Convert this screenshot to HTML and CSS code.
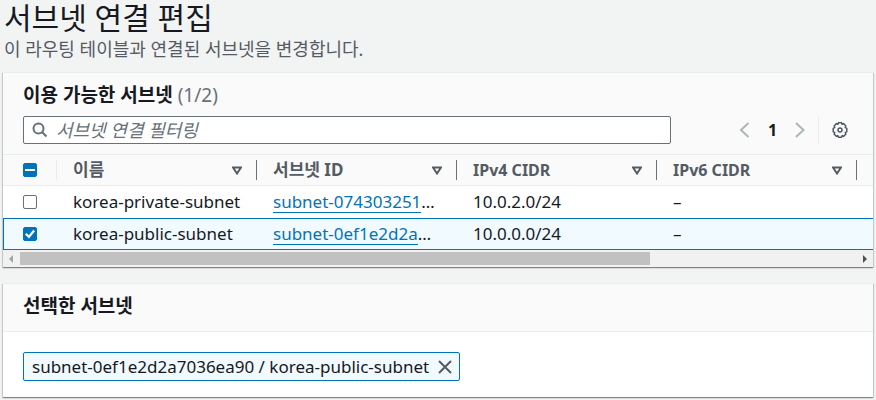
FILE: index.html
```html
<!DOCTYPE html>
<html lang="ko">
<head>
<meta charset="utf-8">
<meta name="viewport" content="width=device-width, initial-scale=1">
<title>서브넷 연결 편집</title>
<link rel="stylesheet" href="styles.css">
</head>
<body>
<main class="page">
  <header class="page-header">
    <h1>서브넷 연결 편집</h1>
    <p>이 라우팅 테이블과 연결된 서브넷을 변경합니다.</p>
  </header>

  <section class="panel">
    <div class="panel-top">
      <h2>이용 가능한 서브넷 <span class="count">(1/2)</span></h2>
      <div class="tools">
        <label class="search">
          <svg class="search-icon" viewBox="0 0 16 16" width="16" height="16" aria-hidden="true"><circle cx="6.5" cy="6.5" r="5"/><path d="M10.2 10.2 14.500 14.500"/></svg>
          <input type="text" placeholder="서브넷 연결 필터링" aria-label="서브넷 연결 필터링">
        </label>
        <nav class="pager">
          <button type="button" class="icon-button arrow" aria-label="이전"><svg viewBox="0 0 16 16" width="16" height="16"><path d="M11.500 1 4 8l7.500 7"/></svg></button>
          <button type="button" class="page-number">1</button>
          <button type="button" class="icon-button arrow" aria-label="다음"><svg viewBox="0 0 16 16" width="16" height="16"><path d="M4 1 11.500 8 4 15"/></svg></button>
        </nav>
        <div class="settings">
          <button type="button" class="icon-button gear" aria-label="설정"><svg viewBox="0 0 16 16" width="16" height="16"><path d="M6.500.8h3l.6 1.400 1.500-.5 2.200 2.200-.5 1.500 1.500.9v3.400l-1.500.9.5 1.500-2.200 2.200-1.500-.5-.6 1.400h-3l-.6-1.400-1.500.5-2.200-2.200.5-1.500-1.500-.9V6.300l1.500-.9-.5-1.500 2.200-2.200 1.500.5z"/><circle cx="8" cy="8" r="2"/></svg></button>
        </div>
      </div>
    </div>

    <div class="table-scroll">
      <table>
        <colgroup><col class="col-check"><col class="col-data"><col class="col-data"><col class="col-data"><col class="col-data"><col class="col-data"></colgroup>
        <thead>
          <tr>
            <th><div class="head light"><input type="checkbox" class="mixed" aria-label="모두 선택"></div></th>
            <th><div class="head korean"><span>이름</span><svg viewBox="0 0 10 9" width="10" height="9"><path d="M1 1.500h8L5 7.500z"/></svg></div></th>
            <th><div class="head korean"><span>서브넷 ID</span><svg viewBox="0 0 10 9" width="10" height="9"><path d="M1 1.500h8L5 7.500z"/></svg></div></th>
            <th><div class="head"><span>IPv4 CIDR</span><svg viewBox="0 0 10 9" width="10" height="9"><path d="M1 1.500h8L5 7.500z"/></svg></div></th>
            <th><div class="head"><span>IPv6 CIDR</span><svg viewBox="0 0 10 9" width="10" height="9"><path d="M1 1.500h8L5 7.500z"/></svg></div></th>
            <th></th>
          </tr>
        </thead>
        <tbody>
          <tr>
            <td><input type="checkbox" aria-label="korea-private-subnet"></td>
            <td>korea-private-subnet</td>
            <td><a href="#">subnet-074303251</a>…</td>
            <td>10.0.2.0/24</td>
            <td>–</td>
            <td></td>
          </tr>
          <tr class="selected">
            <td><input type="checkbox" checked aria-label="korea-public-subnet"></td>
            <td>korea-public-subnet</td>
            <td><a href="#">subnet-0ef1e2d2a</a>…</td>
            <td>10.0.0.0/24</td>
            <td>–</td>
            <td></td>
          </tr>
        </tbody>
      </table>
    </div>
    <div class="scrollbar" aria-hidden="true">
      <svg class="scroll-left" viewBox="0 0 17 16" width="17" height="16"><path d="M10 4v8L6 8z"/></svg>
      <div class="track"><div class="thumb"></div></div>
      <svg class="scroll-right" viewBox="0 0 17 16" width="17" height="16"><path d="M7 4v8l4-4z"/></svg>
    </div>
  </section>

  <section class="panel">
    <div class="panel-title"><h2>선택한 서브넷</h2></div>
    <div class="panel-body">
      <span class="token">subnet-0ef1e2d2a7036ea90 / korea-public-subnet
        <button type="button" class="icon-button close" aria-label="제거"><svg viewBox="0 0 16 16" width="16" height="16"><path d="m2 2 12 12M14 2 2 14"/></svg></button>
      </span>
    </div>
  </section>
</main>
</body>
</html>
```
FILE: styles.css
```css
* { box-sizing: border-box; }

body {
  margin: 0;
  background: #f2f3f3;
  color: #16191f;
  font: 17px/22px "Noto Sans", "Noto Sans CJK KR", sans-serif;
}

h1, h2, p { margin: 0; font-weight: 400; }
button, input { font: inherit; color: inherit; }
svg { display: block; fill: none; stroke: currentColor; stroke-width: 2; }

.page { padding: 0 3px; }
.page-header { height: 72px; padding: 0 1px; }
h1 { font-size: 30px; line-height: 36px; }
.page-header p { color: #545b64; font-size: 18px; line-height: 26px; }

.panel {
  margin-bottom: 16px;
  border-top: 1px solid #eaeded;
  background: #fff;
  box-shadow: 0 1px 1px 0 rgba(0, 28, 36, 0.3), 1px 1px 1px 0 rgba(0, 28, 36, 0.15), -1px 1px 1px 0 rgba(0, 28, 36, 0.15);
}
.panel-top { padding: 8px 20px 10px; background: #fafafa; }
h2 { font-size: 19px; line-height: 28px; font-weight: 700; }
.count { color: #687078; font-weight: 400; }

.tools { display: flex; align-items: center; margin-top: 7px; }
.search {
  display: flex;
  align-items: center;
  flex: 0 1 648px;
  height: 28px;
  padding-left: 8px;
  gap: 8px;
  border: 1px solid #687078;
  border-radius: 2px;
  background: #fff;
}
.search-icon { flex: none; color: #687078; }
.search input {
  flex: 1;
  min-width: 0;
  padding: 0;
  border: 0;
  outline: 0;
  background: none;
  font-size: 18px;
}
.search input::placeholder { color: #687078; font-style: italic; opacity: 1; }

.icon-button, .page-number { padding: 0; border: 0; background: none; }
.pager { display: flex; align-items: center; margin-left: auto; }
.arrow { color: #aab7b8; }
.page-number { width: 39px; font-size: 16px; font-weight: 700; }
.settings {
  display: flex;
  align-items: center;
  height: 28px;
  margin: 0 5px 0 10px;
  padding-left: 13px;
  border-left: 1px solid #eaeded;
}
.gear { color: #545b64; }
.gear svg { overflow: visible; stroke-width: 1.5; }

.table-scroll { overflow: hidden; }
table { width: 1054px; table-layout: fixed; border-collapse: separate; border-spacing: 0; }
.col-check { width: 54px; }
.col-data { width: 200px; }
th, td { height: 32px; padding: 0 0 0 16px; text-align: left; white-space: nowrap; }
th {
  border-top: 1px solid #eaeded;
  border-bottom: 1px solid #eaeded;
  background: #fafafa;
  color: #545b64;
  font-size: 16px;
}
.head {
  display: flex;
  align-items: center;
  justify-content: space-between;
  height: 20px;
  padding-right: 14px;
  border-right: 1px solid #687078;
}
.head.light { border-color: #eaeded; }
.head.korean { font-size: 17px; }
th:first-child, td:first-child { padding-left: 20px; }

td a {
  display: inline-block;
  border-bottom: 1px solid #0073bb;
  color: #0073bb;
  line-height: 20px;
  text-decoration: none;
}
.selected td {
  border-top: 1px solid #0073bb;
  border-bottom: 1px solid #0073bb;
  background: #f1faff;
}
.selected td:first-child { padding-left: 19px; border-left: 1px solid #0073bb; }

input[type="checkbox"] {
  appearance: none;
  display: grid;
  place-items: center;
  width: 14px;
  height: 14px;
  margin: 0;
  border: 1px solid #687078;
  border-radius: 2px;
  background: #fff;
}
input.mixed[type="checkbox"], input[type="checkbox"]:checked { border-color: #0073bb; background: #0073bb; }
input.mixed::before { content: ""; width: 10px; height: 2px; background: #fff; }
input[type="checkbox"]:checked::before {
  content: "";
  width: 10px;
  height: 10px;
  background: #fff;
  clip-path: polygon(0 55%, 15% 40%, 38% 63%, 82% 8%, 100% 22%, 40% 95%);
}

.scrollbar { display: flex; align-items: center; height: 17px; background: #f1f1f1; }
.scrollbar svg { flex: none; stroke: none; }
.scroll-left { color: #a3a3a3; fill: currentColor; }
.scroll-right { color: #505050; fill: currentColor; }
.track { flex: 1; }
.thumb { width: 75.4%; height: 13px; background: #c1c1c1; }

.panel-title { padding: 8px 20px 11px; border-bottom: 1px solid #eaeded; background: #fafafa; }
.panel-body { padding: 20px 20px 16px; }
.token {
  display: flex;
  align-items: center;
  gap: 8px;
  width: fit-content;
  height: 29px;
  padding: 0 6px 0 8px;
  border: 1px solid #0073bb;
  border-radius: 2px;
  background: #f1faff;
}
.close { color: #545b64; }
```
